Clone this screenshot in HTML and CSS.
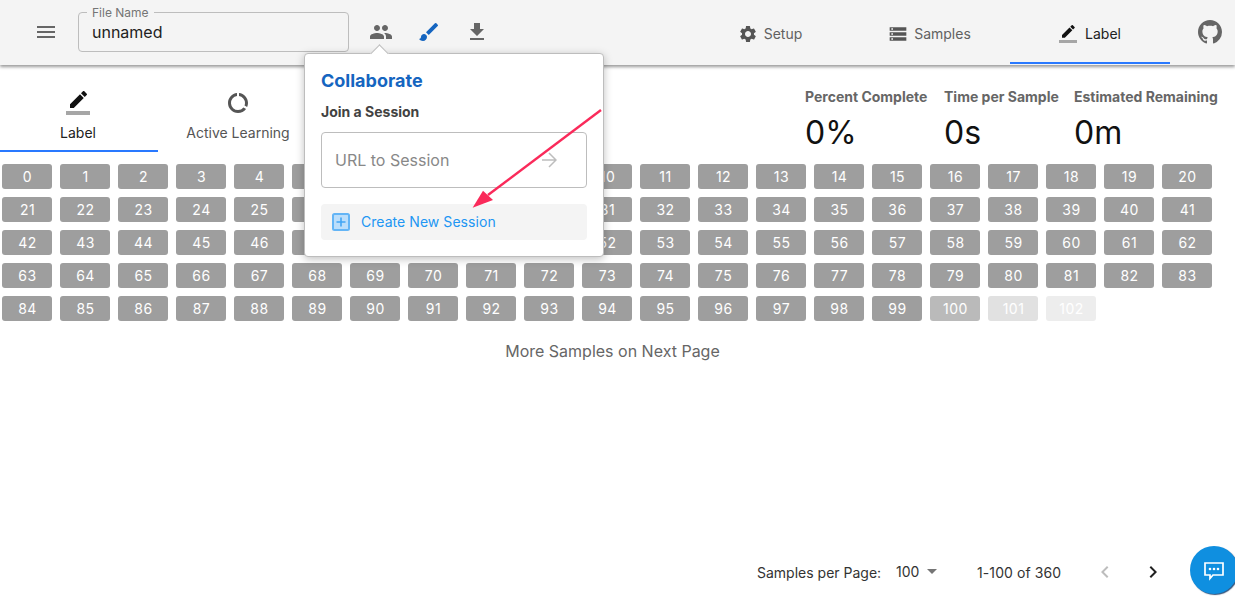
FILE: index.html
```html
<!DOCTYPE html>
<html lang="en">
<head>
<meta charset="utf-8">
<title>Label</title>
<link rel="stylesheet" href="styles.css">
</head>
<body>
<header class="topbar">
  <button class="icon-btn menu-btn" aria-label="Menu"><svg width="24" height="24" viewBox="0 0 24 24"><path d="M3 18h18v-2H3v2zm0-5h18v-2H3v2zm0-7v2h18V6H3z"/></svg></button>
  <div class="file-field">
    <span class="file-legend">File Name</span>
    <span class="file-value">unnamed</span>
  </div>
  <div class="tools">
    <svg class="tool" width="24" height="24" viewBox="0 0 24 24"><path d="M16 11c1.66 0 2.99-1.34 2.99-3S17.66 5 16 5c-1.66 0-3 1.34-3 3s1.34 3 3 3zm-8 0c1.66 0 2.99-1.34 2.99-3S9.66 5 8 5C6.34 5 5 6.34 5 8s1.34 3 3 3zm0 2c-2.33 0-7 1.17-7 3.5V19h14v-2.5c0-2.33-4.67-3.5-7-3.5zm8 0c-.29 0-.62.02-.97.05 1.16.84 1.97 1.97 1.97 3.45V19h6v-2.5c0-2.33-4.67-3.5-7-3.5z"/></svg>
    <svg class="tool brush" width="24" height="24" viewBox="0 0 24 24"><path d="M7 14c-1.66 0-3 1.34-3 3 0 1.31-1.16 2-2 2 .92 1.22 2.49 2 4 2 2.21 0 4-1.79 4-4 0-1.66-1.34-3-3-3zm13.71-9.37l-1.34-1.34a.996.996 0 0 0-1.41 0L9 12.25 11.75 15l8.96-8.96a.996.996 0 0 0 0-1.41z"/></svg>
    <svg class="tool" width="24" height="24" viewBox="0 0 24 24"><path d="M19 9h-4V3H9v6H5l7 7 7-7zM5 18v2h14v-2H5z"/></svg>
  </div>
  <nav class="nav-tabs">
    <div class="nav-tab"><svg width="20" height="20" viewBox="0 0 24 24"><path d="M19.14 12.94c.04-.3.06-.61.06-.94 0-.32-.02-.64-.07-.94l2.03-1.58a.49.49 0 0 0 .12-.61l-1.92-3.32a.488.488 0 0 0-.59-.22l-2.39.96c-.5-.38-1.03-.7-1.62-.94l-.36-2.54a.484.484 0 0 0-.48-.41h-3.84c-.24 0-.43.17-.47.41l-.36 2.54c-.59.24-1.13.57-1.62.94l-2.39-.96c-.22-.08-.47 0-.59.22L2.74 8.87c-.12.21-.08.47.12.61l2.03 1.58c-.05.3-.09.63-.09.94s.02.64.07.94l-2.03 1.58a.49.49 0 0 0-.12.61l1.92 3.32c.12.22.37.29.59.22l2.39-.96c.5.38 1.03.7 1.62.94l.36 2.54c.05.24.24.41.48.41h3.84c.24 0 .44-.17.47-.41l.36-2.54c.59-.24 1.13-.56 1.62-.94l2.39.96c.22.08.47 0 .59-.22l1.92-3.32c.12-.22.07-.47-.12-.61l-2.01-1.58zM12 15.6c-1.98 0-3.6-1.62-3.6-3.6s1.62-3.6 3.6-3.6 3.6 1.62 3.6 3.6-1.62 3.6-3.6 3.6z"/></svg><span>Setup</span></div>
    <div class="nav-tab nav-tab-samples"><svg width="20" height="20" viewBox="0 0 24 24"><path d="M2 20h20v-4H2v4zm2-3h2v2H4v-2zM2 4v4h20V4H2zm4 3H4V5h2v2zm-4 7h20v-4H2v4zm2-3h2v2H4v-2z"/></svg><span>Samples</span></div>
    <div class="nav-tab is-active"><svg width="18" height="18" viewBox="0 0 24 24"><path class="pencil" d="M17.75 7 14 3.25l-10 10V17h3.75l10-10zm2.96-2.96a.996.996 0 0 0 0-1.41L18.37.29a.996.996 0 0 0-1.41 0L15 2.25 18.75 6l1.96-1.96z"/><path class="baseline" d="M0 20h24v4H0z"/></svg><span>Label</span></div>
  </nav>
  <svg class="github" width="24" height="24" viewBox="0 0 16 16"><path d="M8 0C3.58 0 0 3.58 0 8c0 3.54 2.29 6.53 5.47 7.59.4.07.55-.17.55-.38 0-.19-.01-.82-.01-1.49-2.01.37-2.53-.49-2.69-.94-.09-.23-.48-.94-.82-1.13-.28-.15-.68-.52-.01-.53.63-.01 1.08.58 1.23.82.72 1.21 1.87.87 2.33.66.07-.52.28-.87.51-1.07-1.78-.2-3.64-.89-3.64-3.95 0-.87.31-1.59.82-2.15-.08-.2-.36-1.02.08-2.12 0 0 .67-.21 2.2.82.64-.18 1.32-.27 2-.27s1.36.09 2 .27c1.53-1.04 2.2-.82 2.2-.82.44 1.1.16 1.92.08 2.12.51.56.82 1.27.82 2.15 0 3.07-1.87 3.75-3.65 3.95.29.25.54.73.54 1.48 0 1.07-.01 1.93-.01 2.2 0 .21.15.46.55.38A8.01 8.01 0 0 0 16 8c0-4.42-3.58-8-8-8z"/></svg>
</header>

<main class="content">
  <section class="summary">
    <div class="mode-tabs">
      <div class="mode-tab is-active"><svg width="24" height="24" viewBox="0 0 24 24"><path class="pencil" d="M17.75 7 14 3.25l-10 10V17h3.75l10-10zm2.96-2.96a.996.996 0 0 0 0-1.41L18.37.29a.996.996 0 0 0-1.41 0L15 2.25 18.75 6l1.96-1.96z"/><path class="baseline" d="M0 20h24v4H0z"/></svg><span>Label</span></div>
      <div class="mode-tab mode-tab-wide"><svg width="24" height="24" viewBox="0 0 24 24"><path d="M13 2.06v3.03A7 7 0 0 1 19 12c0 .9-.17 1.76-.48 2.55l2.6 1.5A9.96 9.96 0 0 0 22 12c0-5.18-3.95-9.45-9-9.94zM12 19a7 7 0 0 1-1-13.93V2.06C5.95 2.55 2 6.82 2 12c0 5.52 4.47 10 10 10 3.3 0 6.23-1.6 8.05-4.08l-2.6-1.5A6.98 6.98 0 0 1 12 19z"/></svg><span>Active Learning</span></div>
    </div>
    <div class="stats">
      <div class="stat stat-percent"><div class="stat-label">Percent Complete</div><div class="stat-value">0%</div></div>
      <div class="stat stat-time"><div class="stat-label">Time per Sample</div><div class="stat-value">0s</div></div>
      <div class="stat"><div class="stat-label">Estimated Remaining</div><div class="stat-value">0m</div></div>
    </div>
  </section>

  <section class="chips">
    <div class="chip">0</div><div class="chip">1</div><div class="chip">2</div><div class="chip">3</div><div class="chip">4</div><div class="chip">5</div><div class="chip">6</div><div class="chip">7</div><div class="chip">8</div><div class="chip">9</div><div class="chip">10</div><div class="chip">11</div><div class="chip">12</div><div class="chip">13</div><div class="chip">14</div><div class="chip">15</div><div class="chip">16</div><div class="chip">17</div><div class="chip">18</div><div class="chip">19</div><div class="chip">20</div>
    <div class="chip">21</div><div class="chip">22</div><div class="chip">23</div><div class="chip">24</div><div class="chip">25</div><div class="chip">26</div><div class="chip">27</div><div class="chip">28</div><div class="chip">29</div><div class="chip">30</div><div class="chip">31</div><div class="chip">32</div><div class="chip">33</div><div class="chip">34</div><div class="chip">35</div><div class="chip">36</div><div class="chip">37</div><div class="chip">38</div><div class="chip">39</div><div class="chip">40</div><div class="chip">41</div>
    <div class="chip">42</div><div class="chip">43</div><div class="chip">44</div><div class="chip">45</div><div class="chip">46</div><div class="chip">47</div><div class="chip">48</div><div class="chip">49</div><div class="chip">50</div><div class="chip">51</div><div class="chip">52</div><div class="chip">53</div><div class="chip">54</div><div class="chip">55</div><div class="chip">56</div><div class="chip">57</div><div class="chip">58</div><div class="chip">59</div><div class="chip">60</div><div class="chip">61</div><div class="chip">62</div>
    <div class="chip">63</div><div class="chip">64</div><div class="chip">65</div><div class="chip">66</div><div class="chip">67</div><div class="chip">68</div><div class="chip">69</div><div class="chip">70</div><div class="chip">71</div><div class="chip">72</div><div class="chip">73</div><div class="chip">74</div><div class="chip">75</div><div class="chip">76</div><div class="chip">77</div><div class="chip">78</div><div class="chip">79</div><div class="chip">80</div><div class="chip">81</div><div class="chip">82</div><div class="chip">83</div>
    <div class="chip">84</div><div class="chip">85</div><div class="chip">86</div><div class="chip">87</div><div class="chip">88</div><div class="chip">89</div><div class="chip">90</div><div class="chip">91</div><div class="chip">92</div><div class="chip">93</div><div class="chip">94</div><div class="chip">95</div><div class="chip">96</div><div class="chip">97</div><div class="chip">98</div><div class="chip">99</div><div class="chip chip-fade1">100</div><div class="chip chip-fade2">101</div><div class="chip chip-fade3">102</div>
  </section>

  <p class="more">More Samples on Next Page</p>

  <footer class="pager">
    <span class="pager-label">Samples per Page:</span>
    <span class="pager-select">100<svg width="24" height="24" viewBox="0 0 24 24"><path d="M7 10l5 5 5-5z"/></svg></span>
    <span class="pager-range">1-100 of 360</span>
    <svg class="pager-prev" width="24" height="24" viewBox="0 0 24 24"><path d="M15.41 7.41 14 6l-6 6 6 6 1.41-1.41L10.83 12z"/></svg>
    <svg class="pager-next" width="24" height="24" viewBox="0 0 24 24"><path d="M10 6 8.59 7.41 13.17 12l-4.58 4.59L10 18l6-6z"/></svg>
  </footer>
</main>

<aside class="popover">
  <span class="popover-caret"></span>
  <h2 class="popover-title">Collaborate</h2>
  <h3 class="popover-sub">Join a Session</h3>
  <div class="url-field">
    <span>URL to Session</span>
    <svg width="16" height="16" viewBox="0 0 16 16"><path d="M1 8h14M8 1l7 7-7 7" fill="none" stroke="#bdbdbd" stroke-width="1.5"/></svg>
  </div>
  <div class="create-row">
    <svg width="20" height="20" viewBox="0 0 20 20"><rect x="2" y="2" width="16" height="16" rx="1.5" fill="#bbdefb" stroke="#64b5f6" stroke-width="2"/><path d="M10 5.5v9M5.500 10h9" stroke="#42a5f5" stroke-width="1.6"/></svg>
    <span class="create-label">Create New Session</span>
  </div>
</aside>

<svg class="annotation" width="1235" height="605" viewBox="0 0 1235 605"><path d="M601 110 488 195" fill="none" stroke="#fa2a5a" stroke-width="2.4"/><path d="M472.600 207.700 483 190.700 493 200z" fill="#fa2a5a"/></svg>

<button class="fab" aria-label="Chat"><svg width="24" height="24" viewBox="0 0 24 24"><path d="M3 5h18v12H11l-3 3.500V17H3z" fill="none" stroke="#fff" stroke-width="1.7"/><circle cx="8" cy="11" r="1.300" fill="#fff"/><circle cx="12" cy="11" r="1.300" fill="#fff"/><circle cx="16" cy="11" r="1.300" fill="#fff"/></svg></button>
</body>
</html>
```
FILE: styles.css
```css
* { box-sizing: border-box; }
html, body { margin: 0; height: 100%; overflow: hidden; }
body {
  font-family: Inter, "Liberation Sans", sans-serif;
  color: #212121;
  background: #fff;
  display: flex;
  flex-direction: column;
}
svg { display: block; flex: none; }

.topbar {
  height: 65px;
  flex: none;
  background: #f4f4f4;
  display: flex;
  align-items: center;
  box-shadow: 0 2px 3px rgba(0, 0, 0, .4);
  position: relative;
  z-index: 1;
}
.icon-btn { border: 0; background: none; padding: 0; }
.menu-btn { margin-left: 34px; margin-right: 20px; margin-top: -2px; fill: #666; }
.file-field {
  width: 271px;
  height: 40px;
  margin-top: -1px;
  border: 1px solid #bdbdbd;
  border-radius: 4px;
  position: relative;
  padding-left: 13px;
  display: flex;
  align-items: center;
}
.file-legend {
  position: absolute;
  top: -7px;
  left: 8px;
  padding: 0 5px;
  background: #f4f4f4;
  font-size: 12px;
  line-height: 14px;
  color: #757575;
}
.file-value { font-size: 16px; line-height: 20px; color: #212121; }
.tools { display: flex; align-items: center; gap: 24px; margin-left: 20px; margin-top: -1px; fill: #666; }
.brush { fill: #1565c0; }
.nav-tabs { display: flex; position: absolute; left: 690px; top: 0; height: 65px; }
.nav-tab {
  width: 160px;
  height: 64px;
  display: flex;
  align-items: center;
  justify-content: center;
  gap: 6px;
  font-size: 14px;
  color: #616161;
  fill: #555;
  padding-top: 3px;
}
.nav-tab-samples { padding-right: 1px; }
.nav-tab.is-active { color: #212121; gap: 8px; border-bottom: 2px solid #2979ff; padding-top: 5px; }
.pencil { fill: #111; }
.baseline { fill: #a6a6a6; }
.github { position: absolute; left: 1198px; top: 20px; fill: #666; }

.content { flex: 1; display: flex; flex-direction: column; min-height: 0; }
.summary { display: flex; height: 99px; flex: none; }
.mode-tabs { display: flex; width: 318px; flex: none; }
.mode-tab {
  width: 158px;
  height: 87px;
  display: flex;
  flex-direction: column;
  align-items: center;
  padding: 26px 2px 0 0;
  gap: 9px;
  font-size: 14px;
  line-height: 18px;
  color: #555;
  fill: #555;
}
.mode-tab-wide { width: 160px; padding-right: 0; }
.mode-tab.is-active { color: #212121; border-bottom: 2px solid #2979ff; }
.stats { margin-left: 487px; display: flex; padding-top: 23px; }
.stat-percent { width: 139px; }
.stat-time { width: 130px; }
.stat-label { font-size: 14px; font-weight: 700; line-height: 18px; color: #666; white-space: nowrap; }
.stat-value { font-size: 32px; line-height: 40px; color: #111; margin-top: 7px; }

.chips {
  display: grid;
  grid-template-columns: repeat(21, 50px);
  grid-auto-rows: 25px;
  gap: 8px;
  padding-left: 2px;
  flex: none;
}
.chip {
  background: #9e9e9e;
  border-radius: 3px;
  color: #fff;
  font-size: 14px;
  letter-spacing: .5px;
  padding-left: 1px;
  display: flex;
  align-items: center;
  justify-content: center;
}
.chip-fade1 { opacity: .7; }
.chip-fade2 { opacity: .3; }
.chip-fade3 { opacity: .18; }
.more {
  margin: 20px 0 0;
  padding-right: 10px;
  font-size: 16px;
  line-height: 20px;
  color: #666;
  text-align: center;
  flex: none;
}
.pager {
  margin-top: auto;
  height: 66px;
  display: flex;
  align-items: center;
  padding-left: 757px;
  font-size: 14px;
  color: #333;
  flex: none;
}
.pager-label { width: 139px; }
.pager-select { display: flex; align-items: center; gap: 1px; width: 81px; margin-top: -2px; fill: #757575; }
.pager-range { width: 116px; letter-spacing: .1px; }
.pager-prev { fill: #bdbdbd; margin-right: 24px; }
.pager-next { fill: #212121; }

.popover {
  position: absolute;
  left: 304px;
  top: 53px;
  width: 300px;
  height: 204px;
  z-index: 2;
  background: #fff;
  border: 1px solid #bdbdbd;
  border-radius: 4px;
  box-shadow: 0 2px 8px rgba(0, 0, 0, .25);
  padding: 16px;
}
.popover-caret {
  position: absolute;
  left: 68px;
  top: -7px;
  width: 13px;
  height: 13px;
  background: #fff;
  border-left: 1px solid #bdbdbd;
  border-top: 1px solid #bdbdbd;
  transform: rotate(45deg);
}
.popover-title { margin: 0; font-size: 18px; line-height: 22px; font-weight: 700; color: #1565c0; }
.popover-sub { margin: 11px 0 0; font-size: 14px; line-height: 18px; font-weight: 700; color: #424242; }
.url-field {
  margin-top: 11px;
  height: 56px;
  border: 1px solid #bdbdbd;
  border-radius: 4px;
  display: flex;
  align-items: center;
  justify-content: space-between;
  padding: 0 29px 0 13px;
  font-size: 16px;
  color: #888;
}
.create-row {
  margin-top: 16px;
  height: 36px;
  border-radius: 4px;
  background: #f4f4f4;
  display: flex;
  align-items: center;
  gap: 10px;
  padding-left: 10px;
  font-size: 14px;
  color: #2196f3;
}
.create-label { margin-top: -2px; letter-spacing: .05px; }
.annotation { position: absolute; left: 0; top: 0; z-index: 3; pointer-events: none; }
.fab {
  position: absolute;
  left: 1190px;
  top: 546px;
  width: 48px;
  height: 48px;
  border: 0;
  padding: 0;
  border-radius: 50%;
  background: #0f8fe0;
  box-shadow: 1px 1px 1px rgba(0, 40, 90, .8);
  display: flex;
  align-items: center;
  justify-content: center;
  z-index: 3;
}
```
